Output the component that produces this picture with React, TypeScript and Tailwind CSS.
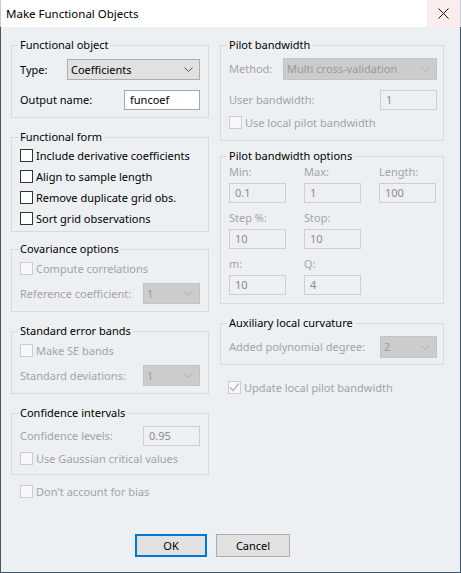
import React from "react";

const DIS = "text-[#a3a3a3]";

function Chevron({ color }: { color: string }) {
  return (
    <svg width="9" height="5" viewBox="0 0 9 5" className="shrink-0">
      <polyline points="0.5,0.5 4.5,4.5 8.5,0.5" fill="none" stroke={color} strokeWidth="1" />
    </svg>
  );
}

function Select({ value, w, h, disabled }: { value: string; w: string; h: string; disabled?: boolean }) {
  return (
    <div
      className={`${w} ${h} flex items-center justify-between pl-[3px] pr-[6px] border ${
        disabled ? "bg-[#cccccc] border-[#c2c2c2] text-[#9a9a9a]" : "bg-[#e1e1e1] border-[#adadad] text-black"
      }`}
    >
      <span>{value}</span>
      <Chevron color={disabled ? "#b0b0b0" : "#505050"} />
    </div>
  );
}

function Input({ value, w, disabled }: { value: string; w: string; disabled?: boolean }) {
  return (
    <div
      className={`${w} h-[20px] flex items-center pl-[5px] border ${
        disabled ? "bg-[#edf0f3] border-[#cfcfcf] text-[#8c8c8c]" : "bg-white border-[#a8a8a8] text-black"
      }`}
    >
      {value}
    </div>
  );
}

function Check({ label, disabled, checked }: { label: string; disabled?: boolean; checked?: boolean }) {
  return (
    <div className="h-[21px] flex items-center gap-[3px]">
      <div
        className={`w-[13px] h-[13px] border flex items-center justify-center ${
          disabled ? "border-[#cccccc] bg-[#f7f8f9]" : "border-[#333333] bg-white"
        }`}
      >
        {checked && (
          <svg width="11" height="11" viewBox="0 0 11 11">
            <polyline points="1,5.5 4,8.5 10,1.5" fill="none" stroke={disabled ? "#b4b4b4" : "#000"} strokeWidth="1.2" />
          </svg>
        )}
      </div>
      <span className={disabled ? DIS : "text-black"}>{label}</span>
    </div>
  );
}

function Group({ title, className, children }: { title: string; className?: string; children: React.ReactNode }) {
  return (
    <fieldset className={`border border-[#d7dbe0] ${className ?? ""}`}>
      <legend className="-ml-[2px] px-[2px] leading-[16px] text-black">{title}</legend>
      {children}
    </fieldset>
  );
}

export default function App() {
  return (
    <div className="w-[461px] h-[573px] flex flex-col font-['Noto_Sans',sans-serif] text-[11px] leading-[16px] bg-[#edf0f3]">
      {/* Title bar */}
      <div className="h-[27px] shrink-0 bg-white flex items-stretch justify-between border-l border-r border-[#c8ccd0]">
        <div className="pl-[5px] flex items-center text-[11.5px] text-black">Make Functional Objects</div>
        <div className="w-[33px] bg-[#fbeded] flex items-center justify-center">
          <svg width="11" height="11" viewBox="0 0 11 11">
            <line x1="0.5" y1="0.5" x2="10.5" y2="10.5" stroke="#111" strokeWidth="1" />
            <line x1="10.5" y1="0.5" x2="0.5" y2="10.5" stroke="#111" strokeWidth="1" />
          </svg>
        </div>
      </div>

      {/* Body */}
      <div className="flex-1 flex flex-col border-l border-r border-b border-[#43566a] pl-[10px] pr-[16px] pt-[10px]">
        <div className="flex gap-[11px] items-start">
          {/* Left column */}
          <div className="w-[198px] flex flex-col">
            <Group title="Functional object" className="pl-[8px] pr-[8px] pt-[6px] pb-[7px]">
              <div className="h-[21px] flex items-center justify-between">
                <span>Type:</span>
                <Select value="Coefficients" w="w-[133px]" h="h-[21px]" />
              </div>
              <div className="h-[21px] mt-[9px] flex items-center justify-between">
                <span>Output name:</span>
                <Input value="funcoef" w="w-[76px]" />
              </div>
            </Group>

            <Group title="Functional form" className="mt-[11px] pl-[8px] pr-[8px] pb-[2px]">
              <Check label="Include derivative coefficients" />
              <Check label="Align to sample length" />
              <Check label="Remove duplicate grid obs." />
              <Check label="Sort grid observations" />
            </Group>

            <Group title="Covariance options" className="mt-[9px] pl-[8px] pr-[8px] pt-[1px] pb-[7px]">
              <Check label="Compute correlations" disabled />
              <div className="h-[21px] mt-[4px] flex items-center justify-between">
                <span className={DIS}>Reference coefficient:</span>
                <Select value="1" w="w-[57px]" h="h-[21px]" disabled />
              </div>
            </Group>

            <Group title="Standard error bands" className="mt-[11px] pl-[8px] pr-[8px] pt-[1px] pb-[7px]">
              <Check label="Make SE bands" disabled />
              <div className="h-[21px] mt-[4px] flex items-center justify-between">
                <span className={DIS}>Standard deviations:</span>
                <Select value="1" w="w-[57px]" h="h-[21px]" disabled />
              </div>
            </Group>

            <Group title="Confidence intervals" className="mt-[11px] pl-[8px] pr-[8px] pt-[4px] pb-[5px]">
              <div className="h-[21px] flex items-center justify-between">
                <span className={DIS}>Confidence levels:</span>
                <Input value="0.95" w="w-[57px]" disabled />
              </div>
              <div className="mt-[2px]">
                <Check label="Use Gaussian critical values" disabled />
              </div>
            </Group>

            <div className="mt-[6px] pl-[9px]">
              <Check label="Don't account for bias" disabled />
            </div>
          </div>

          {/* Right column */}
          <div className="w-[224px] flex flex-col">
            <Group title="Pilot bandwidth" className="pl-[8px] pr-[6px] pt-[5px] pb-[7px]">
              <div className="h-[22px] flex items-center justify-between">
                <span className={DIS}>Method:</span>
                <Select value="Multi cross-validation" w="w-[154px]" h="h-[22px]" disabled />
              </div>
              <div className="h-[21px] mt-[9px] flex items-center justify-between">
                <span className={DIS}>User bandwidth:</span>
                <Input value="1" w="w-[57px]" disabled />
              </div>
              <div className="mt-[2px]">
                <Check label="Use local pilot bandwidth" disabled />
              </div>
            </Group>

            <Group title="Pilot bandwidth options" className="mt-[7px] pl-[8px] pr-[6px] pt-[1px] pb-[8px]">
              <div className="grid grid-cols-[57px_57px_57px] gap-x-[18px] gap-y-[8px]">
                {[
                  ["Min:", "0.1"],
                  ["Max:", "1"],
                  ["Length:", "100"],
                  ["Step %:", "10"],
                  ["Stop:", "10"],
                  null,
                  ["m:", "10"],
                  ["Q:", "4"],
                  null,
                ].map((c, i) =>
                  c ? (
                    <div key={i} className="flex flex-col gap-[4px]">
                      <span className={`h-[14px] leading-[14px] ${DIS}`}>{c[0]}</span>
                      <Input value={c[1]} w="w-[57px]" disabled />
                    </div>
                  ) : (
                    <div key={i} />
                  )
                )}
              </div>
            </Group>

            <Group title="Auxiliary local curvature" className="mt-[11px] pl-[8px] pr-[6px] pt-[5px] pb-[6px]">
              <div className="h-[22px] flex items-center justify-between">
                <span className={DIS}>Added polynomial degree:</span>
                <Select value="2" w="w-[57px]" h="h-[22px]" disabled />
              </div>
            </Group>

            <div className="mt-[12px] pl-[8px]">
              <Check label="Update local pilot bandwidth" disabled checked />
            </div>
          </div>
        </div>

        {/* Buttons */}
        <div className="mt-[32px] pl-[124px] flex gap-[9px]">
          <div className="w-[72px] h-[23px] flex items-center justify-center bg-[#e1e1e1] border-2 border-[#0078d7] text-black">
            OK
          </div>
          <div className="w-[74px] h-[23px] flex items-center justify-center bg-[#e1e1e1] border border-[#adadad] text-black">
            Cancel
          </div>
        </div>
      </div>
    </div>
  );
}
